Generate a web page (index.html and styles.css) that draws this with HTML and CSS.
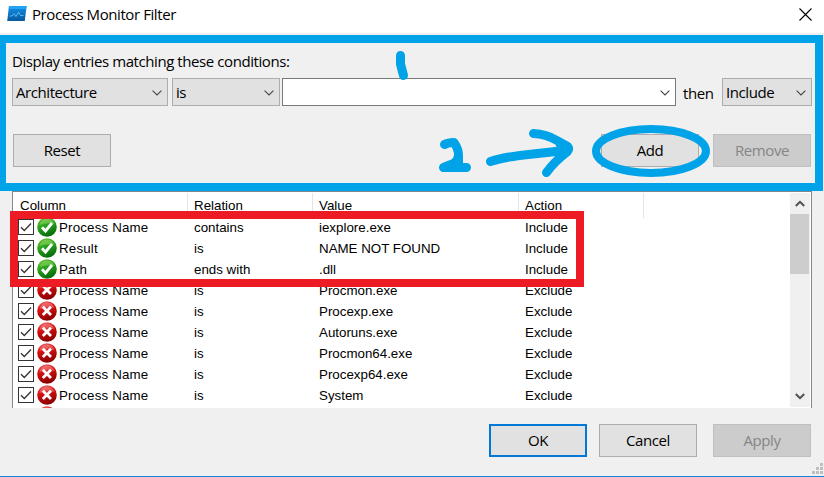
FILE: index.html
```html
<!DOCTYPE html>
<html lang="en">
<head>
<meta charset="utf-8">
<title>Process Monitor Filter</title>
<link rel="stylesheet" href="styles.css">
</head>
<body>
<svg class="defs" width="0" height="0" aria-hidden="true">
  <defs>
    <linearGradient id="green" x1="0" y1="0" x2="0.4" y2="1"><stop offset="0" stop-color="#70c43a"/><stop offset="0.45" stop-color="#2fa71f"/><stop offset="1" stop-color="#07700c"/></linearGradient>
    <linearGradient id="red" x1="0" y1="0" x2="0.3" y2="1"><stop offset="0" stop-color="#ee7777"/><stop offset="0.4" stop-color="#dc1414"/><stop offset="1" stop-color="#8e0000"/></linearGradient>
    <linearGradient id="blue" x1="0" y1="0" x2="0" y2="1"><stop offset="0" stop-color="#1590e8"/><stop offset="1" stop-color="#065a9e"/></linearGradient>
  </defs>
  <symbol id="box" viewBox="0 0 16 16"><rect x="0.5" y="0.5" width="15" height="15" fill="#fff" stroke="#333"/><path d="M3 8.2 6.3 11.5 13 4.5" fill="none" stroke="#333" stroke-width="1.3"/></symbol>
  <symbol id="yes" viewBox="0 0 20 20"><circle cx="10" cy="10" r="9.8" fill="url(#green)"/><path d="M2.5 8Q4 2 10 1.6Q16 2 17.5 7Q10 5 2.5 8Z" fill="#a6df76" opacity=".45"/><path d="M5 10.2 8.5 14 15 6" fill="none" stroke="#fff" stroke-width="2.8"/></symbol>
  <symbol id="no" viewBox="0 0 20 20"><circle cx="10" cy="10" r="9.8" fill="url(#red)"/><path d="M2.5 8Q4 2 10 1.6Q16 2 17.5 7Q10 5 2.5 8Z" fill="#f7b0b0" opacity=".4"/><path d="M5.8 5.8 14 14M14 5.8 5.8 14" fill="none" stroke="#fff" stroke-width="2.8"/></symbol>
  <symbol id="chev" viewBox="0 0 10 6"><path d="M0.6 0.6 5 5 9.4 0.6" fill="none" stroke="#444" stroke-width="1.1"/></symbol>
</svg>
<div class="window">
  <header class="titlebar">
    <svg class="app-icon" width="20" height="16" viewBox="0 0 20 16"><path d="M2 0H19.6L17.8 15H0.2Z" fill="url(#blue)"/><path d="M2 0H19.6L19.2 3H1.7Z" fill="#22a4f4"/><path d="M2.5 10H5L7 7.5 9 10.5 11.5 6 13.5 9.5H16.5" fill="none" stroke="#55b9f5" stroke-width="1"/></svg>
    <span class="ui title">Process Monitor Filter</span>
    <svg class="close" width="13" height="13" viewBox="0 0 13 13"><path d="M0.5 0.5 12.5 12.5M12.5 0.5 0.5 12.5" stroke="#000" stroke-width="1.1"/></svg>
  </header>

  <section class="conditions">
    <div class="ui prompt">Display entries matching these conditions:</div>
    <div class="fields">
      <div class="ui combo arch"><span>Architecture</span><svg width="10" height="6"><use href="#chev"/></svg></div>
      <div class="ui combo relation"><span>is</span><svg width="10" height="6"><use href="#chev"/></svg></div>
      <div class="ui combo value"><span></span><svg width="10" height="6"><use href="#chev"/></svg></div>
      <span class="ui then">then</span>
      <div class="ui combo action"><span>Include</span><svg width="10" height="6"><use href="#chev"/></svg></div>
    </div>
    <div class="buttons">
      <div class="ui button">Reset</div>
      <div class="ui button add">Add</div>
      <div class="ui button disabled">Remove</div>
    </div>
  </section>

  <main class="list">
    <div class="table">
      <div class="head"><span>Column</span><span>Relation</span><span>Value</span><span>Action</span></div>
      <div class="row"><svg class="check"><use href="#box"/></svg><svg class="state"><use href="#yes"/></svg><span class="name">Process Name</span><span>contains</span><span>iexplore.exe</span><span>Include</span></div>
      <div class="row"><svg class="check"><use href="#box"/></svg><svg class="state"><use href="#yes"/></svg><span class="name">Result</span><span>is</span><span>NAME NOT FOUND</span><span>Include</span></div>
      <div class="row"><svg class="check"><use href="#box"/></svg><svg class="state"><use href="#yes"/></svg><span class="name">Path</span><span>ends with</span><span>.dll</span><span>Include</span></div>
      <div class="row"><svg class="check"><use href="#box"/></svg><svg class="state"><use href="#no"/></svg><span class="name">Process Name</span><span>is</span><span>Procmon.exe</span><span>Exclude</span></div>
      <div class="row"><svg class="check"><use href="#box"/></svg><svg class="state"><use href="#no"/></svg><span class="name">Process Name</span><span>is</span><span>Procexp.exe</span><span>Exclude</span></div>
      <div class="row"><svg class="check"><use href="#box"/></svg><svg class="state"><use href="#no"/></svg><span class="name">Process Name</span><span>is</span><span>Autoruns.exe</span><span>Exclude</span></div>
      <div class="row"><svg class="check"><use href="#box"/></svg><svg class="state"><use href="#no"/></svg><span class="name">Process Name</span><span>is</span><span>Procmon64.exe</span><span>Exclude</span></div>
      <div class="row"><svg class="check"><use href="#box"/></svg><svg class="state"><use href="#no"/></svg><span class="name">Process Name</span><span>is</span><span>Procexp64.exe</span><span>Exclude</span></div>
      <div class="row"><svg class="check"><use href="#box"/></svg><svg class="state"><use href="#no"/></svg><span class="name">Process Name</span><span>is</span><span>System</span><span>Exclude</span></div>
      <div class="row"><i></i><svg class="state"><use href="#no"/></svg></div>
    </div>
    <div class="scrollbar">
      <svg width="10" height="7" viewBox="0 0 10 7"><path d="M0.8 6 5 1.8 9.2 6" fill="none" stroke="#505050" stroke-width="2"/></svg>
      <div class="thumb"></div>
      <svg width="10" height="7" viewBox="0 0 10 7"><path d="M0.8 1 5 5.2 9.2 1" fill="none" stroke="#505050" stroke-width="2"/></svg>
    </div>
  </main>

  <footer class="footer">
    <div class="ui button default">OK</div>
    <div class="ui button">Cancel</div>
    <div class="ui button disabled apply">Apply</div>
  </footer>
  <svg class="grip" width="11" height="11" viewBox="0 0 11 11" fill="#bfbfbf"><path d="M8 0h3v3h-3zM4 4h3v3h-3zM8 4h3v3h-3zM0 8h3v3h-3zM4 8h3v3h-3zM8 8h3v3h-3z"/></svg>
  <div class="mark"></div>
  <svg class="ink" width="824" height="477" viewBox="0 0 824 477" fill="none" stroke="#00a2e8" stroke-width="9" stroke-linecap="round" stroke-linejoin="round">
    <path d="M400.5 55.5V64L403.5 75.5"/>
    <path d="M444.5 144.5Q448 142.500 454 142.500Q458.500 149 458.500 155Q458 162 451 164.500L443.500 167.500H466.500M458.500 155V163"/>
    <path d="M490.500 161.500Q506 156.500 533 154Q552 152 568 150M533.500 133.500Q546 134 557 140.500L567.500 146.500Q570 149 567 152Q554 162 546.500 172.500M560 144L566 150"/>
    <ellipse cx="651" cy="151" rx="55" ry="22" stroke-width="8"/>
  </svg>
</div>
</body>
</html>
```
FILE: styles.css
```css
* { box-sizing: border-box; }
body { margin: 0; background: #f0f0f0; overflow: hidden; }
.defs { position: absolute; }
.window { position: relative; width: 824px; height: 477px; background: #f0f0f0; border-bottom: 1px solid #1883d7; color: #000; }
.ui { font-family: "Open Sans", sans-serif; font-size: 15px; letter-spacing: -0.42px; white-space: nowrap; }

.titlebar { height: 33px; background: #fff; display: flex; align-items: flex-start; padding: 6px 12px 0 7px; }
.app-icon { flex: none; }
.title { margin: -1px auto 0 5px; line-height: 18px; }
.close { margin-top: 2px; }

.conditions { width: 823px; height: 156px; margin-top: 2px; border: 8px solid #00a2e8; border-left-width: 6px; padding: 9px 3px 0 6px; }
.prompt { height: 26px; line-height: 18px; }
.fields { display: flex; height: 28px; }
.combo { display: flex; align-items: center; justify-content: space-between; height: 28px; border: 1px solid #adadad; background: #e1e1e1; padding: 0 5px 0 3px; line-height: 26px; }
.combo svg { margin-top: 1px; }
.arch { width: 156px; }
.relation { width: 108px; margin-left: 4px; }
.value { width: 394px; margin-left: 2px; background: #fff; border-color: #7a7a7a; }
.then { width: 39px; margin-left: 7px; line-height: 31px; }
.action { width: 90px; }
.buttons { display: flex; margin: 28px 0 0 1px; }
.button { width: 98px; height: 33px; border: 1px solid #adadad; background: #e1e1e1; text-align: center; line-height: 31px; }
.disabled { background: #ccc; border-color: #bfbfbf; color: #858585; }
.add { margin: 0 14px 0 490px; }

.list { display: flex; justify-content: space-between; width: 800px; height: 217px; margin-left: 12px; border: 1px solid #828790; border-bottom: 0; background: #fff; overflow: hidden; font: 13.33px "Liberation Sans", sans-serif; }
.table { width: 640px; }
.head, .row { display: grid; grid-template-columns: 175px 125px 206px 125px; }
.head { height: 25px; padding-top: 1px; line-height: 25px; }
.head span { border-right: 1px solid #e5e5e5; padding-left: 6px; }
.head span:first-child { padding-left: 7px; }
.row { grid-template-columns: 18.5px 22.5px 135px 125px 206px 100px; height: 21px; line-height: 22px; padding-left: 5px; white-space: nowrap; }
.name { letter-spacing: 0.17px; }
.check { width: 16px; height: 16px; margin-top: 2px; }
.state { width: 20px; height: 20px; }
.scrollbar { width: 20px; height: 214px; margin: 1px 1px 0 0; background: #f0f0f0; display: flex; flex-direction: column; align-items: center; justify-content: space-between; padding: 7px 0; }
.thumb { width: 19px; height: 60px; margin: 7px 1px auto 0; background: #cdcdcd; }

.footer { display: flex; gap: 12px; margin: 16px 0 0 489px; }
.default { border: 2px solid #0078d7; line-height: 29px; }
.apply { margin-left: 4px; }

.grip { position: absolute; left: 812px; top: 463px; }
.mark { position: absolute; left: 10px; top: 211px; width: 574px; height: 76px; border: 8px solid #ed1c24; }
.ink { position: absolute; left: 0; top: 0; }
```
